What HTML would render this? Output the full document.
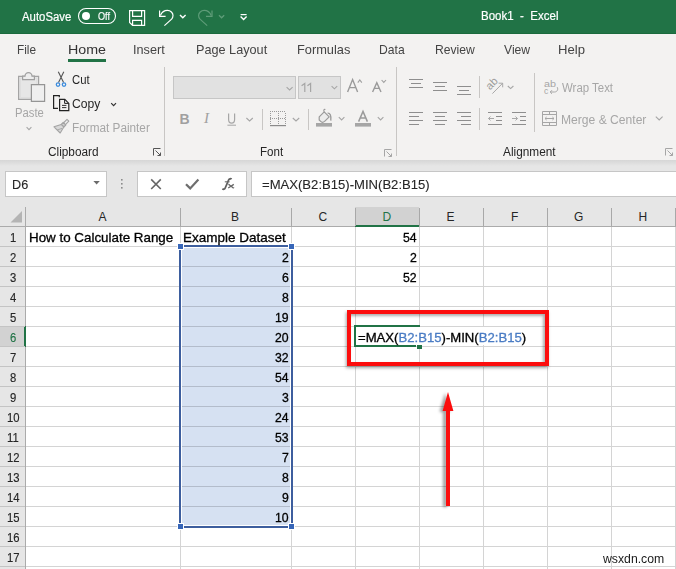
<!DOCTYPE html>
<html><head><meta charset="utf-8">
<style>
*{margin:0;padding:0;box-sizing:border-box}
html,body{width:676px;height:569px;overflow:hidden;background:#fff;font-family:"Liberation Sans",sans-serif}
.a{position:absolute}
.t{position:absolute;white-space:pre;line-height:1;font-family:"Liberation Sans",sans-serif}
svg{position:absolute;overflow:visible}
</style></head><body>
<!-- title bar -->
<div class="a" style="left:0;top:0;width:676px;height:34px;background:#217346"></div>
<div class="a" style="left:0;top:33px;width:676px;height:1px;background:#1b6a3d"></div>
<!-- ribbon -->
<div class="a" style="left:0;top:34px;width:676px;height:126px;background:#f3f2f1"></div>
<div class="a" style="left:68px;top:59px;width:38px;height:3px;background:#217346"></div>
<div class="a" style="left:0;top:160px;width:676px;height:6px;background:linear-gradient(#d6d6d6,#e6e6e6)"></div>
<!-- formula bar area -->
<div class="a" style="left:0;top:166px;width:676px;height:41px;background:#e6e6e6"></div>
<div class="a" style="left:5px;top:171px;width:102px;height:26px;background:#fff;border:1px solid #c6c6c6"></div>
<div class="a" style="left:137px;top:171px;width:110px;height:26px;background:#fff;border:1px solid #c6c6c6"></div>
<div class="a" style="left:251px;top:171px;width:430px;height:26px;background:#fff;border:1px solid #c6c6c6"></div>
<!-- header row -->
<div class="a" style="left:0;top:207px;width:676px;height:19px;background:#e6e6e6"></div>
<svg style="left:0;top:0" width="30" height="230"><polygon points="22,211 10.5,222.6 22,222.6" fill="#b4b4b4"/></svg>
<div class="a" style="left:355px;top:207px;width:64px;height:19px;background:#d2d2d2"></div>
<div class="a" style="left:0;top:226px;width:25px;height:343px;background:#e6e6e6"></div>
<div class="a" style="left:0;top:226px;width:676px;height:1px;background:#ababab"></div>
<div class="a" style="left:355px;top:225px;width:64px;height:2px;background:#217346"></div>
<div class="a" style="left:25px;top:207px;width:1px;height:362px;background:#ababab"></div>
<div class="a" style="left:0;top:327px;width:24px;height:19px;background:#d2d2d2"></div>
<div class="a" style="left:24px;top:326px;width:2px;height:21px;background:#217346"></div>
<div class="a" style="left:26px;top:246px;width:650px;height:1px;background:#d4d4d4"></div>
<div class="a" style="left:0;top:246px;width:25px;height:1px;background:#c4c4c4"></div>
<div class="a" style="left:26px;top:266px;width:650px;height:1px;background:#d4d4d4"></div>
<div class="a" style="left:0;top:266px;width:25px;height:1px;background:#c4c4c4"></div>
<div class="a" style="left:26px;top:286px;width:650px;height:1px;background:#d4d4d4"></div>
<div class="a" style="left:0;top:286px;width:25px;height:1px;background:#c4c4c4"></div>
<div class="a" style="left:26px;top:306px;width:650px;height:1px;background:#d4d4d4"></div>
<div class="a" style="left:0;top:306px;width:25px;height:1px;background:#c4c4c4"></div>
<div class="a" style="left:26px;top:326px;width:650px;height:1px;background:#d4d4d4"></div>
<div class="a" style="left:0;top:326px;width:25px;height:1px;background:#c4c4c4"></div>
<div class="a" style="left:26px;top:346px;width:650px;height:1px;background:#d4d4d4"></div>
<div class="a" style="left:0;top:346px;width:25px;height:1px;background:#c4c4c4"></div>
<div class="a" style="left:26px;top:366px;width:650px;height:1px;background:#d4d4d4"></div>
<div class="a" style="left:0;top:366px;width:25px;height:1px;background:#c4c4c4"></div>
<div class="a" style="left:26px;top:386px;width:650px;height:1px;background:#d4d4d4"></div>
<div class="a" style="left:0;top:386px;width:25px;height:1px;background:#c4c4c4"></div>
<div class="a" style="left:26px;top:406px;width:650px;height:1px;background:#d4d4d4"></div>
<div class="a" style="left:0;top:406px;width:25px;height:1px;background:#c4c4c4"></div>
<div class="a" style="left:26px;top:426px;width:650px;height:1px;background:#d4d4d4"></div>
<div class="a" style="left:0;top:426px;width:25px;height:1px;background:#c4c4c4"></div>
<div class="a" style="left:26px;top:446px;width:650px;height:1px;background:#d4d4d4"></div>
<div class="a" style="left:0;top:446px;width:25px;height:1px;background:#c4c4c4"></div>
<div class="a" style="left:26px;top:466px;width:650px;height:1px;background:#d4d4d4"></div>
<div class="a" style="left:0;top:466px;width:25px;height:1px;background:#c4c4c4"></div>
<div class="a" style="left:26px;top:486px;width:650px;height:1px;background:#d4d4d4"></div>
<div class="a" style="left:0;top:486px;width:25px;height:1px;background:#c4c4c4"></div>
<div class="a" style="left:26px;top:506px;width:650px;height:1px;background:#d4d4d4"></div>
<div class="a" style="left:0;top:506px;width:25px;height:1px;background:#c4c4c4"></div>
<div class="a" style="left:26px;top:526px;width:650px;height:1px;background:#d4d4d4"></div>
<div class="a" style="left:0;top:526px;width:25px;height:1px;background:#c4c4c4"></div>
<div class="a" style="left:26px;top:546px;width:650px;height:1px;background:#d4d4d4"></div>
<div class="a" style="left:0;top:546px;width:25px;height:1px;background:#c4c4c4"></div>
<div class="a" style="left:26px;top:566px;width:650px;height:1px;background:#d4d4d4"></div>
<div class="a" style="left:0;top:566px;width:25px;height:1px;background:#c4c4c4"></div>
<div class="a" style="left:180px;top:227px;width:1px;height:342px;background:#d4d4d4"></div>
<div class="a" style="left:180px;top:208px;width:1px;height:18px;background:#a8a8a8"></div>
<div class="a" style="left:291px;top:227px;width:1px;height:342px;background:#d4d4d4"></div>
<div class="a" style="left:291px;top:208px;width:1px;height:18px;background:#a8a8a8"></div>
<div class="a" style="left:355px;top:227px;width:1px;height:342px;background:#d4d4d4"></div>
<div class="a" style="left:355px;top:208px;width:1px;height:18px;background:#a8a8a8"></div>
<div class="a" style="left:419px;top:227px;width:1px;height:342px;background:#d4d4d4"></div>
<div class="a" style="left:419px;top:208px;width:1px;height:18px;background:#a8a8a8"></div>
<div class="a" style="left:483px;top:227px;width:1px;height:342px;background:#d4d4d4"></div>
<div class="a" style="left:483px;top:208px;width:1px;height:18px;background:#a8a8a8"></div>
<div class="a" style="left:547px;top:227px;width:1px;height:342px;background:#d4d4d4"></div>
<div class="a" style="left:547px;top:208px;width:1px;height:18px;background:#a8a8a8"></div>
<div class="a" style="left:611px;top:227px;width:1px;height:342px;background:#d4d4d4"></div>
<div class="a" style="left:611px;top:208px;width:1px;height:18px;background:#a8a8a8"></div>
<div class="a" style="left:675px;top:227px;width:1px;height:342px;background:#d4d4d4"></div>
<div class="a" style="left:675px;top:208px;width:1px;height:18px;background:#a8a8a8"></div>
<!-- selection -->
<div class="a" style="left:181px;top:247px;width:110px;height:279px;background:#fff"></div>
<div class="a" style="left:182px;top:248px;width:108px;height:277px;background:#d6e1f2"></div>
<div class="a" style="left:182px;top:266px;width:108px;height:1px;background:#b3bccb"></div>
<div class="a" style="left:182px;top:286px;width:108px;height:1px;background:#b3bccb"></div>
<div class="a" style="left:182px;top:306px;width:108px;height:1px;background:#b3bccb"></div>
<div class="a" style="left:182px;top:326px;width:108px;height:1px;background:#b3bccb"></div>
<div class="a" style="left:182px;top:346px;width:108px;height:1px;background:#b3bccb"></div>
<div class="a" style="left:182px;top:366px;width:108px;height:1px;background:#b3bccb"></div>
<div class="a" style="left:182px;top:386px;width:108px;height:1px;background:#b3bccb"></div>
<div class="a" style="left:182px;top:406px;width:108px;height:1px;background:#b3bccb"></div>
<div class="a" style="left:182px;top:426px;width:108px;height:1px;background:#b3bccb"></div>
<div class="a" style="left:182px;top:446px;width:108px;height:1px;background:#b3bccb"></div>
<div class="a" style="left:182px;top:466px;width:108px;height:1px;background:#b3bccb"></div>
<div class="a" style="left:182px;top:486px;width:108px;height:1px;background:#b3bccb"></div>
<div class="a" style="left:182px;top:506px;width:108px;height:1px;background:#b3bccb"></div>
<div class="a" style="left:179px;top:245px;width:114px;height:283px;border:2px solid #3d5e9e"></div>
<div class="a" style="left:177px;top:243px;width:7px;height:7px;background:#fff"></div>
<div class="a" style="left:178px;top:244px;width:5px;height:5px;background:#3766b8"></div>
<div class="a" style="left:288px;top:243px;width:7px;height:7px;background:#fff"></div>
<div class="a" style="left:289px;top:244px;width:5px;height:5px;background:#3766b8"></div>
<div class="a" style="left:177px;top:523px;width:7px;height:7px;background:#fff"></div>
<div class="a" style="left:178px;top:524px;width:5px;height:5px;background:#3766b8"></div>
<div class="a" style="left:288px;top:523px;width:7px;height:7px;background:#fff"></div>
<div class="a" style="left:289px;top:524px;width:5px;height:5px;background:#3766b8"></div>
<!-- active cell + formula overflow -->
<div class="a" style="left:356px;top:327px;width:180px;height:18px;background:#fff"></div>
<div class="a" style="left:354px;top:325px;width:66px;height:2px;background:#217346"></div>
<div class="a" style="left:354px;top:325px;width:2px;height:22px;background:#217346"></div>
<div class="a" style="left:354px;top:345px;width:62px;height:2px;background:#217346"></div>
<div class="a" style="left:417px;top:345px;width:5px;height:4px;background:#217346"></div>
<!-- red box -->
<div class="a" style="left:347px;top:310px;width:202px;height:56px;border:4px solid #fc0d0d;box-shadow:-1px 2px 3px rgba(0,0,0,.35), inset -2px 2px 3px rgba(0,0,0,.32)"></div>
<!-- arrow -->
<svg style="left:0;top:0;filter:drop-shadow(-2.5px 1px 1.6px rgba(0,0,0,.38))" width="676" height="569"><polygon points="448,392 442.6,411 446,411 446,506 450,506 450,411 453.4,411" fill="#fc0d0d"/></svg>
<svg style="left:0;top:0" width="676" height="569" viewBox="0 0 676 569" fill="none">
<!-- title bar -->
<rect x="78.5" y="8.5" width="37" height="15" rx="7.5" stroke="#fff" stroke-width="1.1"/>
<circle cx="86" cy="16" r="4" fill="#fff"/>
<g stroke="#fff" stroke-width="1.2">
<path d="M129.6,10.6 H144.6 V25.4 H132.6 L129.6,22.4 Z"/>
<path d="M132.6,10.6 V16.4 H141.6 V10.6"/>
<path d="M132.6,25.4 V20.4 H141.6 V25.4"/>
<path d="M159.6,10.4 V16.4 H165.6"/>
<path d="M160.4,15.4 C162,11.8 164.6,10.4 167.4,10.4 C170.6,10.4 173,12.8 173,15.6 C173,17 172.6,18 171.6,19.2 L164.4,25.6"/>
<path d="M180,15 L182.8,17.8 L185.6,15" stroke-width="1.4"/>
<path d="M240.6,14.6 H246.6"/>
<path d="M240.6,16.4 L243.6,19.4 L246.6,16.4" stroke-width="1.4"/>
</g>
<g stroke="#5e9c78" stroke-width="1.2">
<path d="M212,10.4 V16.4 H206"/>
<path d="M211.2,15.4 C209.6,11.8 207,10.4 204.2,10.4 C201,10.4 198.6,12.8 198.6,15.6 C198.6,17 199,18 200,19.2 L207.2,25.6"/>
<path d="M219,15.2 L221.6,17.8 L224.2,15.2" stroke-width="1.3"/>
</g>
<!-- ribbon separators -->
<rect x="164" y="67" width="1" height="89" fill="#c8c6c4"/>
<rect x="396" y="67" width="1" height="89" fill="#c8c6c4"/>
<!-- paste -->
<path d="M18.6,76.4 H38.6 V99.4 H18.6 Z" fill="#e6e6e6" stroke="#a4a4a4" stroke-width="1.2"/>
<path d="M20.4,78.2 H36.8 V97.6 H20.4 Z" stroke="#dadada" stroke-width="0.8"/>
<path d="M22.6,79.6 V76.2 H25 A3.5,3.6 0 0 1 32,76.2 H34.4 V79.6 Z" fill="#ededed" stroke="#a0a0a0" stroke-width="1.2"/>
<path d="M31.4,84.6 H44.6 V101.4 H31.4 Z" fill="#efefef" stroke="#959595" stroke-width="1.2"/>
<path d="M26.6,127.2 L29,129.6 L31.4,127.2" stroke="#a6a6a6" stroke-width="1.1"/>
<!-- scissors -->
<path d="M58.3,71.8 L63.6,82.6 M63.8,71.8 L58.5,82.6" stroke="#555" stroke-width="1.1"/>
<circle cx="58" cy="84.6" r="1.7" stroke="#3e8ddd" stroke-width="1.3"/>
<circle cx="64" cy="84.6" r="1.7" stroke="#3e8ddd" stroke-width="1.3"/>
<!-- copy -->
<path d="M59.3,97.2 V95.6 H53.6 V108.4 H58" stroke="#222" stroke-width="1.2"/>
<path d="M59.6,99.4 H64.8 L68.8,103.4 V110.6 H59.6 Z" stroke="#222" stroke-width="1.2"/>
<path d="M64.6,99.6 V103.4 H68.6" stroke="#222" stroke-width="1"/>
<path d="M62,105.4 H66.4 M62,107.6 H66.4" stroke="#333" stroke-width="1"/>
<path d="M111.2,103.2 L113.6,105.6 L116,103.2" stroke="#333" stroke-width="1.2"/>
<!-- format painter -->
<g stroke="#a4a4a4" stroke-width="1.1" stroke-linejoin="round">
<path d="M67,119.4 L68.8,121.2 L65.2,124.8 L63.4,123 Z" fill="#f0f0f0"/>
<path d="M63.2,122.4 L65.8,125 L63.8,127 L61.2,124.4 Z" fill="#d0d0d0"/>
<path d="M61.2,124.4 L54,126.8 L60.2,133 L63.8,127 Z" fill="#d8d8d8"/>
<path d="M57.2,130 L62,128.4" stroke-width="0.9"/>
</g>
<!-- dialog launchers -->
<g stroke="#555" stroke-width="1">
<path d="M153.5,155.5 V148.5 H160.5 M155.5,150.5 L160.5,155.5 M160.5,152.5 V155.5 H157.5"/>
</g>
<g stroke="#a6a6a6" stroke-width="1">
<path d="M384.5,156.5 V149.5 H391.5 M386.5,151.5 L391.5,156.5 M391.5,153.5 V156.5 H388.5"/>
<path d="M665.5,155.5 V148.5 H672.5 M667.5,150.5 L672.5,155.5 M672.5,152.5 V155.5 H669.5"/>
</g>
<!-- font combos -->
<rect x="173.5" y="76.5" width="122" height="22" fill="#e1e1e1" stroke="#c6c6c6"/>
<rect x="298.5" y="76.5" width="42" height="22" fill="#e1e1e1" stroke="#c6c6c6"/>
<g stroke="#a6a6a6" stroke-width="1.1">
<path d="M286.6,87.2 L289.6,90 L292.6,87.2"/>
<path d="M331.6,86.2 L334.4,88.8 L337.2,86.2"/>
<path d="M246.4,118 L249.6,121 L252.8,118"/>
<path d="M292.8,118 L296,121 L299.2,118"/>
<path d="M338.8,117.2 L341.6,120 L344.4,117.2"/>
<path d="M377.8,117.2 L380.6,120 L383.4,117.2"/>
<path d="M507.8,86 L510.6,88.6 L513.4,86"/>
<path d="M655.8,116.6 L659.2,120 L662.6,116.6"/>
</g>
<rect x="262" y="109" width="1" height="21" fill="#c8c6c4"/>
<rect x="308" y="109" width="1" height="21" fill="#c8c6c4"/>
<rect x="479" y="76" width="1" height="22" fill="#c8c6c4"/>
<rect x="479" y="108" width="1" height="22" fill="#c8c6c4"/>
<rect x="534" y="73" width="1" height="59" fill="#c8c6c4"/>
<path d="M301.6,85.8 L304.8,83.4 V92 M307.4,85.8 L310.6,83.4 V92" stroke="#a6a6a6" stroke-width="1.2"/>
<!-- grow/shrink font -->
<path d="M347.6,92 L352.6,79.6 L357.6,92 M349.4,87.6 H355.8" stroke="#9a9a9a" stroke-width="1.4"/>
<path d="M357.8,82.6 L359.8,80 L361.8,82.6" stroke="#a0a0a0" stroke-width="1.1"/>
<path d="M372.6,92 L376.8,82.6 L381,92 M374.2,88.4 H379.4" stroke="#9a9a9a" stroke-width="1.4"/>
<path d="M381.6,80 L383.8,82.4 L386,80" stroke="#a0a0a0" stroke-width="1.1"/>
<!-- borders -->
<g fill="#9a9a9a"><rect x="270" y="111" width="1" height="1"/><rect x="270" y="118" width="1" height="1"/><rect x="272" y="111" width="1" height="1"/><rect x="272" y="118" width="1" height="1"/><rect x="274" y="111" width="1" height="1"/><rect x="274" y="118" width="1" height="1"/><rect x="276" y="111" width="1" height="1"/><rect x="276" y="118" width="1" height="1"/><rect x="278" y="111" width="1" height="1"/><rect x="278" y="118" width="1" height="1"/><rect x="280" y="111" width="1" height="1"/><rect x="280" y="118" width="1" height="1"/><rect x="282" y="111" width="1" height="1"/><rect x="282" y="118" width="1" height="1"/><rect x="284" y="111" width="1" height="1"/><rect x="284" y="118" width="1" height="1"/><rect x="270" y="113" width="1" height="1"/><rect x="285" y="113" width="1" height="1"/><rect x="278" y="113" width="1" height="1"/><rect x="270" y="115" width="1" height="1"/><rect x="285" y="115" width="1" height="1"/><rect x="278" y="115" width="1" height="1"/><rect x="270" y="117" width="1" height="1"/><rect x="285" y="117" width="1" height="1"/><rect x="278" y="117" width="1" height="1"/><rect x="270" y="119" width="1" height="1"/><rect x="285" y="119" width="1" height="1"/><rect x="278" y="119" width="1" height="1"/><rect x="270" y="121" width="1" height="1"/><rect x="285" y="121" width="1" height="1"/><rect x="278" y="121" width="1" height="1"/><rect x="270" y="123" width="1" height="1"/><rect x="285" y="123" width="1" height="1"/><rect x="278" y="123" width="1" height="1"/></g>
<path d="M270,125.6 H286" stroke="#8a8a8a" stroke-width="1.2"/>
<!-- underline U -->
<path d="M228.6,113.4 V119.6 C228.6,122.6 230,123.2 231.6,123.2 C233.2,123.2 234.6,122.6 234.6,119.6 V113.4" stroke="#a6a6a6" stroke-width="1.2"/>
<path d="M227.4,125.2 H236" stroke="#a6a6a6" stroke-width="1"/>
<!-- fill bucket -->
<path d="M319.2,116.8 L324.2,111.8 L329.2,116.8 L324.6,121.4 C323.4,122.4 321.6,122.4 320.4,121.2 L319.2,120 Z" fill="#ececec" stroke="#9a9a9a" stroke-width="1.2" stroke-linejoin="round"/>
<path d="M324.2,111.8 C323.4,110.2 323.8,109 325.4,109.6" stroke="#9a9a9a" stroke-width="1.1"/>
<path d="M327.6,113.2 C330,113 331.4,115.4 330.8,120.6" stroke="#9a9a9a" stroke-width="1.3"/>
<rect x="316" y="123" width="16" height="3.6" fill="#a6a6a6"/>
<!-- font color A -->
<path d="M358.6,121.6 L363,111.4 L367.4,121.6 M360.2,118 H365.8" stroke="#9a9a9a" stroke-width="1.5"/>
<rect x="355" y="123" width="16" height="3.6" fill="#a6a6a6"/>
<!-- alignment lines -->
<g stroke="#8e8e8e" stroke-width="1">
<path d="M409,79.5 H423 M411,83.5 H421 M409,87.5 H423"/>
<path d="M433,82.5 H447 M435,86.5 H445 M433,90.5 H447"/>
<path d="M457,86.5 H471 M459,90.5 H469 M457,94.5 H471"/>
<path d="M409,112.5 H423 M409,116.5 H419 M409,120.5 H423 M409,124.5 H419"/>
<path d="M433,112.5 H447 M435,116.5 H445 M433,120.5 H447 M435,124.5 H445"/>
<path d="M457,112.5 H471 M461,116.5 H471 M457,120.5 H471 M461,124.5 H471"/>
<path d="M488,112.5 H502 M496,116.5 H502 M496,120.5 H502 M488,124.5 H502"/>
<path d="M512,112.5 H526 M520,116.5 H526 M520,120.5 H526 M512,124.5 H526"/>
</g>
<g stroke="#a8a8a8" stroke-width="1">
<path d="M488.5,118.5 H494 M490.5,116.5 L488.5,118.5 L490.5,120.5"/>
<path d="M512,118.5 H517.5 M515.5,116.5 L517.5,118.5 L515.5,120.5"/>
<!-- orientation arrow -->
<path d="M492.4,93.6 L502.7,83.2 M498.6,83.2 H502.7 V87.3"/>
</g>
<text x="0" y="0" transform="translate(490,90.4) rotate(-45)" font-family="Liberation Sans" font-size="11" fill="#9c9c9c">ab</text>
<!-- wrap icon -->
<text x="544" y="87" font-family="Liberation Sans" font-size="8.6" fill="#a6a6a6" textLength="12" lengthAdjust="spacingAndGlyphs">ab</text>
<text x="544" y="93.5" font-family="Liberation Sans" font-size="8.6" fill="#a6a6a6">c</text>
<path d="M557.2,87.2 C558.6,89.6 557,92 554.5,92 H550.2 M552,90.2 L550.2,92 L552,93.8" stroke="#a6a6a6" stroke-width="1"/>
<!-- merge icon -->
<path d="M542.5,111.5 H556.5 V125.5 H542.5 Z M542.5,114.5 H556.5 M542.5,122.5 H556.5 M549.5,111.5 V114.5 M549.5,122.5 V125.5" stroke="#a6a6a6" stroke-width="1"/>
<path d="M545,118.5 H554 M546.6,117 L545,118.5 L546.6,120 M552.4,117 L554,118.5 L552.4,120" stroke="#a6a6a6" stroke-width="1"/>
<!-- formula bar icons -->
<path d="M93.4,181 H99.8 L96.6,184.4 Z" fill="#6b6b6b"/>
<g fill="#8c8c8c"><rect x="121" y="179" width="1.6" height="1.6"/><rect x="121" y="183" width="1.6" height="1.6"/><rect x="121" y="187" width="1.6" height="1.6"/></g>
<path d="M151.2,179.4 L160.8,189 M160.8,179.4 L151.2,189" stroke="#666" stroke-width="1.6"/>
<path d="M186,184.2 L190.2,188.4 L198.4,179.6" stroke="#6e6e6e" stroke-width="2.2"/>
<path d="M231.6,179.2 C230.8,178.4 229.2,178.6 228.6,180 L225.2,188 C224.6,189.4 223.4,189.6 222.4,188.8" stroke="#606060" stroke-width="1.8"/>
<path d="M224.8,181.8 H229.6" stroke="#6b6b6b" stroke-width="1.1"/>
<path d="M228.8,184.4 L233.4,188 M233.8,184.4 L228.2,188" stroke="#666" stroke-width="1.3"/>
<path d="M227.8,184.6 C228.6,184 229.2,184.2 229.4,184.8 M234.2,187.6 C233.4,188.2 232.8,188 232.6,187.4" stroke="#666" stroke-width="0.9"/>
</svg>
<div class="t" style="left:179.6px;top:112px;font-size:14px;font-weight:bold;color:#a0a0a0;line-height:1">B</div>
<div class="t" style="left:204px;top:111px;font-size:15px;font-style:italic;font-family:'Liberation Serif';color:#a0a0a0;line-height:1">I</div>

<div class="t" style="left:21.80px;top:11px;font-size:12.5px;color:#ffffff;transform:scaleX(0.9111);transform-origin:0 0;-webkit-text-stroke:0.2px #ffffff;">AutoSave</div>
<div class="t" style="left:97.80px;top:10.600000000000001px;font-size:10.5px;color:#ffffff;transform:scaleX(0.8714);transform-origin:0 0;-webkit-text-stroke:0.15px #ffffff;">Off</div>
<div class="t" style="left:481.08px;top:10px;font-size:12.5px;color:#ffffff;transform:scaleX(0.9220);transform-origin:0 0;-webkit-text-stroke:0.2px #ffffff;">Book1  -  Excel</div>
<div class="t" style="left:16.89px;top:43px;font-size:13px;color:#444444;transform:scaleX(0.9100);transform-origin:0 0;">File</div>
<div class="t" style="left:67.70px;top:43px;font-size:13px;color:#333333;transform:scaleX(1.0970);transform-origin:0 0;">Home</div>
<div class="t" style="left:132.83px;top:43px;font-size:13px;color:#444444;transform:scaleX(0.9750);transform-origin:0 0;">Insert</div>
<div class="t" style="left:195.83px;top:43px;font-size:13px;color:#444444;transform:scaleX(0.9750);transform-origin:0 0;">Page Layout</div>
<div class="t" style="left:296.82px;top:43px;font-size:13px;color:#444444;transform:scaleX(0.9849);transform-origin:0 0;">Formulas</div>
<div class="t" style="left:378.87px;top:43px;font-size:13px;color:#444444;transform:scaleX(0.9333);transform-origin:0 0;">Data</div>
<div class="t" style="left:434.87px;top:43px;font-size:13px;color:#444444;transform:scaleX(0.9333);transform-origin:0 0;">Review</div>
<div class="t" style="left:503.80px;top:43px;font-size:13px;color:#444444;transform:scaleX(0.9357);transform-origin:0 0;">View</div>
<div class="t" style="left:557.79px;top:43px;font-size:13px;color:#444444;transform:scaleX(1.0080);transform-origin:0 0;">Help</div>
<div class="t" style="left:14.86px;top:107px;font-size:12px;color:#a6a6a6;transform:scaleX(0.9379);transform-origin:0 0;">Paste</div>
<div class="t" style="left:71.89px;top:74px;font-size:12.5px;color:#262626;transform:scaleX(0.9053);transform-origin:0 0;">Cut</div>
<div class="t" style="left:71.83px;top:98px;font-size:12.5px;color:#262626;transform:scaleX(0.9714);transform-origin:0 0;">Copy</div>
<div class="t" style="left:71.86px;top:122px;font-size:12.5px;color:#a6a6a6;transform:scaleX(0.9415);transform-origin:0 0;">Format Painter</div>
<div class="t" style="left:47.82px;top:146px;font-size:12px;color:#262626;transform:scaleX(0.9840);transform-origin:0 0;">Clipboard</div>
<div class="t" style="left:259.83px;top:146px;font-size:12px;color:#262626;transform:scaleX(0.9652);transform-origin:0 0;">Font</div>
<div class="t" style="left:502.80px;top:146px;font-size:12px;color:#262626;transform:scaleX(0.9849);transform-origin:0 0;">Alignment</div>
<div class="t" style="left:561.80px;top:82px;font-size:12.5px;color:#a6a6a6;transform:scaleX(0.9143);transform-origin:0 0;">Wrap Text</div>
<div class="t" style="left:560.83px;top:114px;font-size:12.5px;color:#a6a6a6;transform:scaleX(0.9678);transform-origin:0 0;">Merge &amp; Center</div>
<div class="t" style="left:11.79px;top:178.6px;font-size:12.5px;color:#262626;transform:scaleX(1.0133);transform-origin:0 0;-webkit-text-stroke:0.1px #262626;">D6</div>
<div class="t" style="left:262.11px;top:179px;font-size:12px;color:#262626;transform:scaleX(1.0908);transform-origin:0 0;-webkit-text-stroke:0.1px #262626;">=MAX(B2:B15)-MIN(B2:B15)</div>
<div class="t" style="left:98.50px;top:211px;font-size:12px;color:#262626;">A</div>
<div class="t" style="left:231.00px;top:211px;font-size:12px;color:#262626;">B</div>
<div class="t" style="left:318.50px;top:211px;font-size:12px;color:#262626;">C</div>
<div class="t" style="left:382.50px;top:211px;font-size:12px;color:#217346;">D</div>
<div class="t" style="left:446.50px;top:211px;font-size:12px;color:#262626;">E</div>
<div class="t" style="left:511.00px;top:211px;font-size:12px;color:#262626;">F</div>
<div class="t" style="left:574.00px;top:211px;font-size:12px;color:#262626;">G</div>
<div class="t" style="left:638.50px;top:211px;font-size:12px;color:#262626;">H</div>
<div class="t" style="left:9.91px;top:232px;font-size:12px;color:#262626;transform:scaleX(0.9400);transform-origin:0 0;-webkit-text-stroke:0.15px #262626;">1</div>
<div class="t" style="left:9.91px;top:252px;font-size:12px;color:#262626;transform:scaleX(0.9400);transform-origin:0 0;-webkit-text-stroke:0.15px #262626;">2</div>
<div class="t" style="left:9.91px;top:272px;font-size:12px;color:#262626;transform:scaleX(0.9400);transform-origin:0 0;-webkit-text-stroke:0.15px #262626;">3</div>
<div class="t" style="left:9.91px;top:292px;font-size:12px;color:#262626;transform:scaleX(0.9400);transform-origin:0 0;-webkit-text-stroke:0.15px #262626;">4</div>
<div class="t" style="left:9.91px;top:312px;font-size:12px;color:#262626;transform:scaleX(0.9400);transform-origin:0 0;-webkit-text-stroke:0.15px #262626;">5</div>
<div class="t" style="left:9.91px;top:332px;font-size:12px;color:#217346;transform:scaleX(0.9400);transform-origin:0 0;-webkit-text-stroke:0.15px #217346;">6</div>
<div class="t" style="left:9.91px;top:352px;font-size:12px;color:#262626;transform:scaleX(0.9400);transform-origin:0 0;-webkit-text-stroke:0.15px #262626;">7</div>
<div class="t" style="left:10.38px;top:372px;font-size:12px;color:#262626;transform:scaleX(0.9400);transform-origin:0 0;-webkit-text-stroke:0.15px #262626;">8</div>
<div class="t" style="left:9.91px;top:392px;font-size:12px;color:#262626;transform:scaleX(0.9400);transform-origin:0 0;-webkit-text-stroke:0.15px #262626;">9</div>
<div class="t" style="left:6.62px;top:412px;font-size:12px;color:#262626;transform:scaleX(0.9400);transform-origin:0 0;-webkit-text-stroke:0.15px #262626;">10</div>
<div class="t" style="left:7.09px;top:432px;font-size:12px;color:#262626;transform:scaleX(0.9400);transform-origin:0 0;-webkit-text-stroke:0.15px #262626;">11</div>
<div class="t" style="left:6.62px;top:452px;font-size:12px;color:#262626;transform:scaleX(0.9400);transform-origin:0 0;-webkit-text-stroke:0.15px #262626;">12</div>
<div class="t" style="left:6.62px;top:472px;font-size:12px;color:#262626;transform:scaleX(0.9400);transform-origin:0 0;-webkit-text-stroke:0.15px #262626;">13</div>
<div class="t" style="left:6.62px;top:492px;font-size:12px;color:#262626;transform:scaleX(0.9400);transform-origin:0 0;-webkit-text-stroke:0.15px #262626;">14</div>
<div class="t" style="left:6.62px;top:512px;font-size:12px;color:#262626;transform:scaleX(0.9400);transform-origin:0 0;-webkit-text-stroke:0.15px #262626;">15</div>
<div class="t" style="left:6.62px;top:532px;font-size:12px;color:#262626;transform:scaleX(0.9400);transform-origin:0 0;-webkit-text-stroke:0.15px #262626;">16</div>
<div class="t" style="left:6.62px;top:552px;font-size:12px;color:#262626;transform:scaleX(0.9400);transform-origin:0 0;-webkit-text-stroke:0.15px #262626;">17</div>
<div class="t" style="left:6.62px;top:572px;font-size:12px;color:#262626;transform:scaleX(0.9400);transform-origin:0 0;-webkit-text-stroke:0.15px #262626;">18</div>
<div class="t" style="left:28.75px;top:232px;font-size:12.8px;color:#000000;transform:scaleX(1.0453);transform-origin:0 0;-webkit-text-stroke:0.3px #000000;">How to Calculate Range</div>
<div class="t" style="left:182.75px;top:232px;font-size:12.8px;color:#000000;transform:scaleX(1.0536);transform-origin:0 0;-webkit-text-stroke:0.3px #000000;">Example Dataset</div>
<div class="t" style="left:281.54px;top:252px;font-size:12.5px;color:#000000;transform:scaleX(0.9800);transform-origin:0 0;-webkit-text-stroke:0.3px #000000;">2</div>
<div class="t" style="left:281.54px;top:272px;font-size:12.5px;color:#000000;transform:scaleX(0.9800);transform-origin:0 0;-webkit-text-stroke:0.3px #000000;">6</div>
<div class="t" style="left:281.54px;top:292px;font-size:12.5px;color:#000000;transform:scaleX(0.9800);transform-origin:0 0;-webkit-text-stroke:0.3px #000000;">8</div>
<div class="t" style="left:274.68px;top:312px;font-size:12.5px;color:#000000;transform:scaleX(0.9800);transform-origin:0 0;-webkit-text-stroke:0.3px #000000;">19</div>
<div class="t" style="left:274.68px;top:332px;font-size:12.5px;color:#000000;transform:scaleX(0.9800);transform-origin:0 0;-webkit-text-stroke:0.3px #000000;">20</div>
<div class="t" style="left:274.68px;top:352px;font-size:12.5px;color:#000000;transform:scaleX(0.9800);transform-origin:0 0;-webkit-text-stroke:0.3px #000000;">32</div>
<div class="t" style="left:274.68px;top:372px;font-size:12.5px;color:#000000;transform:scaleX(0.9800);transform-origin:0 0;-webkit-text-stroke:0.3px #000000;">54</div>
<div class="t" style="left:281.54px;top:392px;font-size:12.5px;color:#000000;transform:scaleX(0.9800);transform-origin:0 0;-webkit-text-stroke:0.3px #000000;">3</div>
<div class="t" style="left:274.68px;top:412px;font-size:12.5px;color:#000000;transform:scaleX(0.9800);transform-origin:0 0;-webkit-text-stroke:0.3px #000000;">24</div>
<div class="t" style="left:274.68px;top:432px;font-size:12.5px;color:#000000;transform:scaleX(0.9800);transform-origin:0 0;-webkit-text-stroke:0.3px #000000;">53</div>
<div class="t" style="left:281.54px;top:452px;font-size:12.5px;color:#000000;transform:scaleX(0.9800);transform-origin:0 0;-webkit-text-stroke:0.3px #000000;">7</div>
<div class="t" style="left:281.54px;top:472px;font-size:12.5px;color:#000000;transform:scaleX(0.9800);transform-origin:0 0;-webkit-text-stroke:0.3px #000000;">8</div>
<div class="t" style="left:281.54px;top:492px;font-size:12.5px;color:#000000;transform:scaleX(0.9800);transform-origin:0 0;-webkit-text-stroke:0.3px #000000;">9</div>
<div class="t" style="left:274.68px;top:512px;font-size:12.5px;color:#000000;transform:scaleX(0.9800);transform-origin:0 0;-webkit-text-stroke:0.3px #000000;">10</div>
<div class="t" style="left:403.48px;top:232px;font-size:12.5px;color:#000000;transform:scaleX(0.9800);transform-origin:0 0;-webkit-text-stroke:0.3px #000000;">54</div>
<div class="t" style="left:410.34px;top:252px;font-size:12.5px;color:#000000;transform:scaleX(0.9800);transform-origin:0 0;-webkit-text-stroke:0.3px #000000;">2</div>
<div class="t" style="left:403.48px;top:272px;font-size:12.5px;color:#000000;transform:scaleX(0.9800);transform-origin:0 0;-webkit-text-stroke:0.3px #000000;">52</div>
<div class="t" style="left:603.40px;top:553px;font-size:12px;color:#1a1a1a;transform:scaleX(1.0203);transform-origin:0 0;">wsxdn.com</div>
<div class="t" style="left:357.71px;top:332px;font-size:12px;color:#000000;transform:scaleX(1.0934);transform-origin:0 0;-webkit-text-stroke:0.3px #000000;">=MAX(<span style="color:#4a7cc4;-webkit-text-stroke-color:#4a7cc4">B2:B15</span>)-MIN(<span style="color:#4a7cc4;-webkit-text-stroke-color:#4a7cc4">B2:B15</span>)</div>
</body></html>
